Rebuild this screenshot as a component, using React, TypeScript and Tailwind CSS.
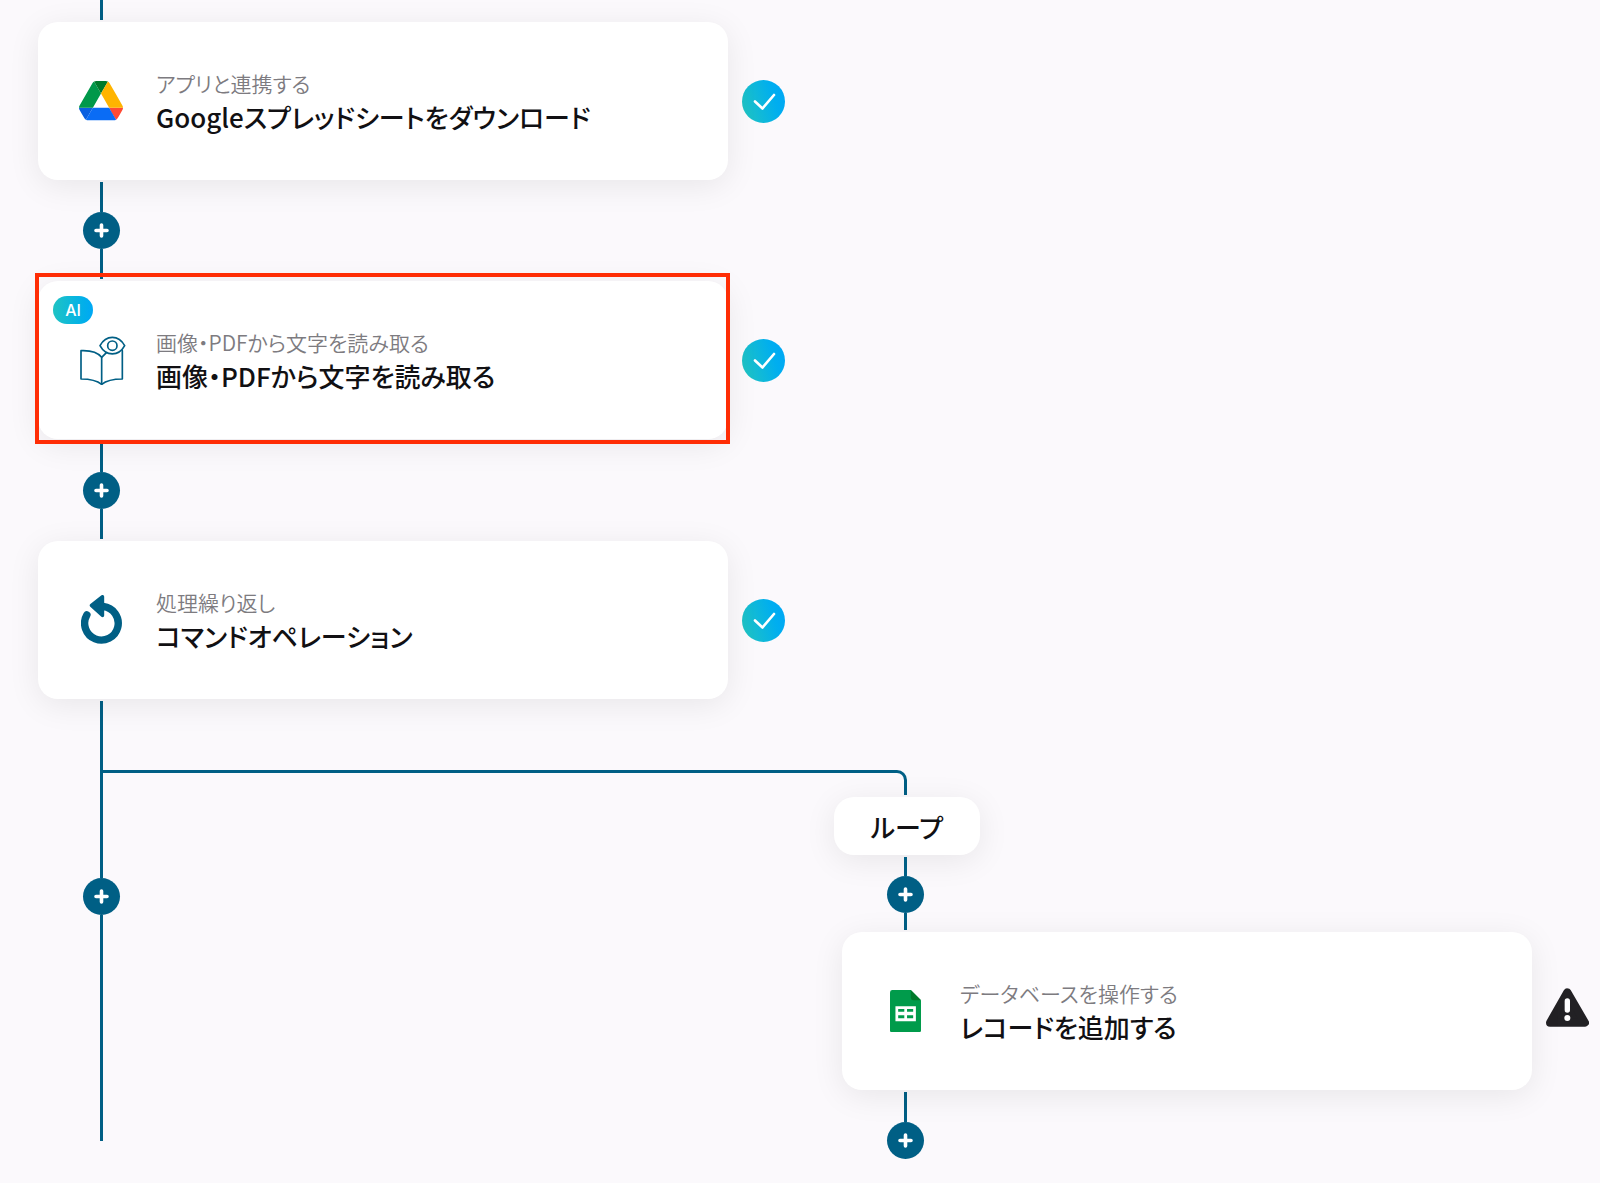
import React from "react";

function DriveIcon() {
  return (
    <svg viewBox="0 0 87.3 78" className="w-11" aria-hidden="true">
      <path d="m6.6 66.85 3.85 6.65c.8 1.4 1.95 2.5 3.3 3.3l13.75-23.8h-27.5c0 1.55.4 3.1 1.2 4.5z" fill="#0a5fe0" />
      <path d="m43.65 25-13.75-23.8c-1.35.8-2.5 1.9-3.3 3.3l-25.4 44a9.06 9.06 0 0 0 -1.2 4.5h27.5z" fill="#00984a" />
      <path d="m73.55 76.8c1.35-.8 2.5-1.9 3.3-3.3l1.6-2.75 7.65-13.25c.8-1.4 1.2-2.95 1.2-4.5h-27.502l5.852 11.5z" fill="#ff4a34" />
      <path d="m43.65 25 13.75-23.8c-1.35-.8-2.9-1.2-4.5-1.2h-18.5c-1.6 0-3.15.45-4.5 1.2z" fill="#007a2b" />
      <path d="m59.8 53h-32.3l-13.75 23.8c1.35.8 2.9 1.2 4.5 1.2h50.8c1.6 0 3.15-.45 4.5-1.2z" fill="#0a6cf5" />
      <path d="m73.4 26.5-12.7-22c-.8-1.4-1.95-2.5-3.3-3.3l-13.75 23.8 16.15 28h27.45c0-1.55-.4-3.1-1.2-4.5z" fill="#ffb400" />
    </svg>
  );
}

function ReadIcon() {
  return (
    <svg
      viewBox="-12 -2 150 150"
      className="w-[50px] shrink-0"
      fill="none"
      stroke="#005f85"
      strokeWidth="5"
      strokeLinejoin="round"
      strokeLinecap="round"
      aria-hidden="true"
    >
      <path d="M65 65C50 46 25 44 3 45V130C25 130 48 132 65 146C82 132 105 130 127 130V45" />
      <path d="M65 146V65L80 50" />
      <path d="M60 30C78 -3 116 -3 134 30C116 63 78 63 60 30Z" fill="#fff" />
      <circle cx="97" cy="30" r="14" />
    </svg>
  );
}

function RepeatIcon() {
  return (
    <svg viewBox="0 0 122 146" className="w-[41px]" aria-hidden="true">
      <path d="M66 34.3A50 50 0 1 1 17.5 59" fill="none" stroke="#005f85" strokeWidth="22" strokeLinecap="round" />
      <path
        d="M31 31L64 5V61Z"
        fill="#005f85"
        stroke="#005f85"
        strokeWidth="10"
        strokeLinejoin="round"
      />
    </svg>
  );
}

function SheetIcon() {
  return (
    <svg viewBox="0 0 91 125" className="w-[31px]" aria-hidden="true">
      <path d="M7 0H61L91 30V118Q91 125 84 125H7Q0 125 0 118V7Q0 0 7 0Z" fill="#009b4b" />
      <path d="M61 0L91 30H68Q61 30 61 23Z" fill="#007a2b" />
      <path
        fillRule="evenodd"
        d="M16 48H76V92H16ZM24 56V64H42V56ZM50 56V64H68V56ZM24 74V83H42V74ZM50 74V83H68V74Z"
        fill="#fff"
      />
    </svg>
  );
}

function DoneMark() {
  return (
    <svg viewBox="0 0 43 43" className="w-[43px] shrink-0" role="img" aria-label="完了">
      <defs>
        <linearGradient id="done" x1="0" y1="0.65" x2="1" y2="0.35">
          <stop offset="0" stopColor="#1fc3c3" />
          <stop offset="0.75" stopColor="#00aeef" />
          <stop offset="1" stopColor="#00a8f5" />
        </linearGradient>
      </defs>
      <circle cx="21.5" cy="21.5" r="21.5" fill="url(#done)" />
      <path d="M13 21.5L20.5 28.5L32 15" fill="none" stroke="#fff" strokeWidth="2.6" strokeLinecap="round" strokeLinejoin="round" />
    </svg>
  );
}

function WarningMark() {
  return (
    <svg viewBox="0 0 129 137" className="w-[43px] shrink-0" role="img" aria-label="警告">
      <path d="M64 13L117 104H12Z" fill="#222124" stroke="#222124" strokeWidth="24" strokeLinejoin="round" />
      <rect x="56" y="31" width="16" height="43" rx="8" fill="#fff" />
      <circle cx="64" cy="90" r="9" fill="#fff" />
    </svg>
  );
}

function AddButton() {
  return (
    <button
      type="button"
      aria-label="追加"
      className="flex size-[37px] shrink-0 items-center justify-center rounded-full bg-[#005f85]"
    >
      <svg viewBox="0 0 15 15" className="size-[15px]" stroke="#fff" strokeWidth="3.6" strokeLinecap="round" aria-hidden="true">
        <path d="M7.5 2V13M2 7.5H13" />
      </svg>
    </button>
  );
}

function Connector({ above, below }: { above: string; below?: string }) {
  return (
    <div className="ml-[45px] flex w-[37px] flex-col items-center py-0.5">
      <div className={`w-[3px] bg-[#005f85] ${above}`} />
      <AddButton />
      {below && <div className={`w-[3px] bg-[#005f85] ${below}`} />}
    </div>
  );
}

type StepProps = {
  icon: React.ReactNode;
  mark: React.ReactNode;
  label: string;
  title: string;
  ai?: boolean;
  selected?: boolean;
};

function Step({ icon, mark, label, title, ai, selected }: StepProps) {
  return (
    <div className="flex items-center gap-3.5">
      <article className="relative flex flex-1 items-center gap-[33px] rounded-[20px] bg-white py-11 pl-[41px] shadow-[0_6px_32px_rgba(0,0,0,0.08)]">
        {ai && (
          <span className="absolute top-[15px] left-[15px] flex h-7 w-10 items-center justify-center rounded-full bg-linear-to-r from-[#1fc3c3] to-[#00a8f5] font-['Inter',sans-serif] text-base font-medium text-white">
            AI
          </span>
        )}
        <div className="flex w-11 shrink-0 justify-center">{icon}</div>
        <div className="pb-0.5">
          <p className="text-[21px] leading-[34px] font-[350] text-[#7d7b80]">{label}</p>
          <h2 className="text-[26px] leading-[34px] font-medium text-[#111013]">{title}</h2>
        </div>
        {selected && (
          <div className="pointer-events-none absolute -top-2 -right-0.5 -bottom-[5px] -left-[3px] border-4 border-[#ff2d05]" />
        )}
      </article>
      {mark}
    </div>
  );
}

export default function App() {
  return (
    <main className="min-h-screen bg-[#fbf9fc] font-['Noto_Sans_CJK_JP',sans-serif] [font-feature-settings:'palt']">
      <section className="w-1/2 pr-[15px] pl-[38px]">
        <div className="mb-0.5 ml-[62px] h-5 w-[3px] bg-[#005f85]" />
        <Step icon={<DriveIcon />} mark={<DoneMark />} label="アプリと連携する" title="Googleスプレッドシートをダウンロード" />
        <Connector above="h-[30px]" below="h-[30px]" />
        <Step
          icon={<ReadIcon />}
          mark={<DoneMark />}
          label="画像・PDFから文字を読み取る"
          title="画像・PDFから文字を読み取る"
          ai
          selected
        />
        <Connector above="h-[31px]" below="h-[30px]" />
        <Step icon={<RepeatIcon />} mark={<DoneMark />} label="処理繰り返し" title="コマンドオペレーション" />
      </section>

      <section className="grid grid-cols-2">
        <div className="flex pl-[38px]">
          <Connector above="h-[177px]" below="h-[226px]" />
          <div className="-ml-[17px] mt-[71px] h-[3px] flex-1 bg-[#005f85]" />
        </div>
        <div className="pt-[71px] pr-[11px]">
          <div className="h-[25px] w-[107px] rounded-tr-[10px] border-t-3 border-r-3 border-[#005f85]" />
          <h3 className="mt-0.5 ml-[34px] flex h-[58px] w-[146px] items-center justify-center rounded-[20px] bg-white text-[26px] font-medium text-[#111013] shadow-[0_6px_32px_rgba(0,0,0,0.08)]">
            ループ
          </h3>
          <div className="pl-[42px]">
            <Connector above="h-[19px]" below="h-[17px]" />
            <Step icon={<SheetIcon />} mark={<WarningMark />} label="データベースを操作する" title="レコードを追加する" />
            <Connector above="h-[30px]" />
          </div>
        </div>
      </section>
    </main>
  );
}
